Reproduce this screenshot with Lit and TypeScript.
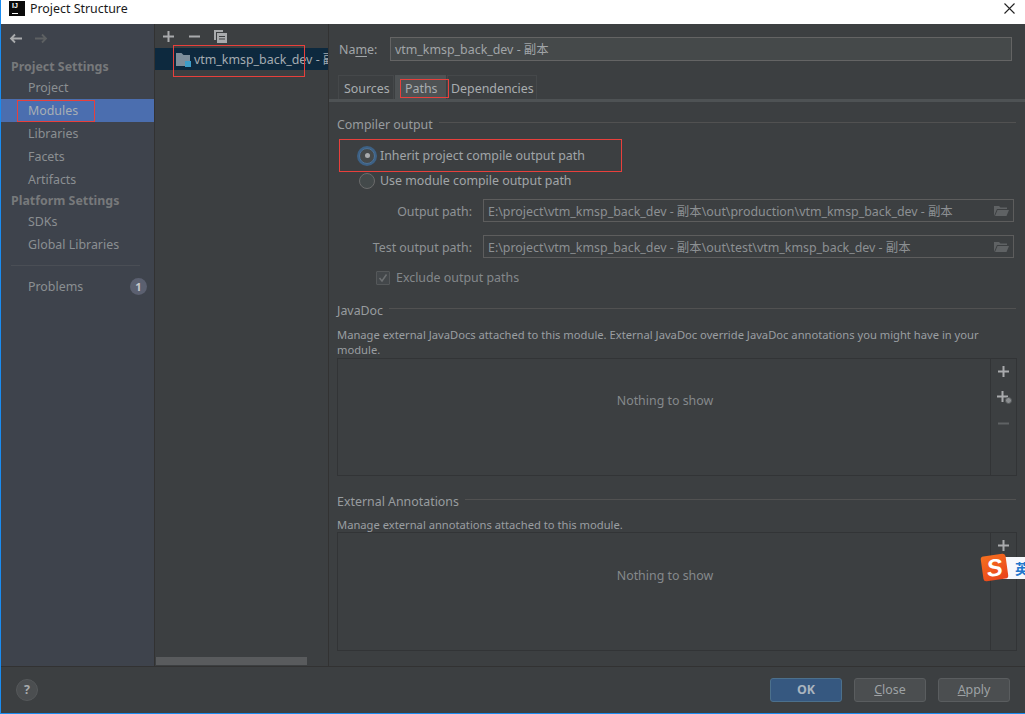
import { LitElement, html, css, svg } from "lit";
import { customElement } from "lit/decorators.js";

const folderIcon = svg`<svg width="14" height="13" viewBox="0 0 14 13"><path d="M0 0h5.500l2 2H14v11H0z" fill="#7d8e9b"/></svg>`;
const openFolder = html`<svg width="15" height="12" viewBox="0 0 15 12"><path d="M0 1h5l1.500 1.500H13V4H3L0 11z" fill="#5f6264"/><path d="M3.500 5H15l-2.500 6H1z" fill="#5f6264"/></svg>`;

@customElement("app-root")
export class AppRoot extends LitElement {
  static styles = css`
    :host {
      display: flex;
      flex-direction: column;
      position: relative;
      width: 1025px;
      height: 714px;
      box-sizing: border-box;
      border-left: 1px solid #1a8cf0;
      border-bottom: 1px solid #1a8cf0;
      background: #3c3f41;
      color: #a1a5a8;
      font: 12.4px/18px "Noto Sans", "Noto Sans CJK SC", sans-serif;
      overflow: hidden;
    }
    .title {
      height: 24px;
      flex: none;
      background: #fff;
      color: #1a1a1a;
      display: flex;
      align-items: flex-start;
      gap: 5px;
      padding: 1px 10px 0 8px;
      box-sizing: border-box;
    }
    .logo {
      width: 16px;
      height: 15px;
      background: #0b0b0b;
      color: #fff;
      font: bold 7px/8px "Liberation Sans", sans-serif;
      padding: 1px 0 0 3px;
      box-sizing: border-box;
      position: relative;
      flex: none;
    }
    .logo::after {
      content: "";
      position: absolute;
      left: 3px;
      bottom: 2px;
      width: 6px;
      height: 1px;
      background: #fff;
    }
    .title .t { flex: 1; line-height: 15px; }
    .title svg { margin-top: 2px; }
    .main { flex: 1; display: flex; min-height: 0; border-bottom: 1px solid #323232; }
    .side {
      width: 153px;
      flex: none;
      background: #3e434c;
      border-right: 1px solid #323232;
      color: #8b8f92;
    }
    .nav { height: 30px; display: flex; align-items: center; gap: 11px; padding: 0 0 2px 8px; box-sizing: border-box; }
    .hd { height: 19px; line-height: 20px; padding-left: 10px; font-weight: 700; color: #77797b; margin-top: 3px; }
    .hd.p2 { height: 19px; line-height: 19px; margin-top: 0; }
    .item { height: 23px; line-height: 23px; padding-left: 27px; display: flex; justify-content: space-between; align-items: center; padding-right: 7px; }
    .item.sel { background: #4b6eaf; color: #a8aeb4; }
    .sep { height: 1px; background: #4a4e55; margin: 9px 14px 9px 10px; }
    .badge { width: 17px; height: 17px; border-radius: 50%; background: #5b6070; color: #c6c8ca; font-size: 11px; font-weight: 700; line-height: 17px; text-align: center; }
    .mid {
      width: 173px;
      flex: none;
      display: flex;
      flex-direction: column;
      border-right: 1px solid #323232;
      min-width: 0;
    }
    .tools { height: 24px; flex: none; display: flex; align-items: center; gap: 15px; padding: 0 0 0 8px; }
    .tools svg:last-child { margin-left: -1px; margin-top: 1px; }
    .row {
      height: 22px;
      flex: none;
      background: #0d293e;
      color: #a5acb2;
      display: flex;
      align-items: center;
      gap: 4px;
      padding-left: 21px;
      white-space: nowrap;
      overflow: hidden;
    }
    .row .label { padding-top: 2px; }
    .fi { position: relative; display: flex; flex: none; }
    .fi i { position: absolute; right: -1px; bottom: -1px; width: 6px; height: 6px; background: #3d9ec9; }
    .mgap { flex: 1; }
    .hbar { height: 8px; width: 151px; background: #595b5d; margin: 0 0 1px 1px; flex: none; }
    .right { flex: 1; min-width: 0; display: flex; flex-direction: column; }
    .name { display: flex; align-items: center; gap: 12px; padding: 13px 13px 0 10px; height: 24px; flex: none; }
    .name > span { width: 39px; flex: none; padding-top: 2px; }
    .name u { text-underline-offset: 2px; }
    .input {
      flex: 1;
      height: 24px;
      box-sizing: border-box;
      border: 1px solid #646464;
      background: #45494a;
      line-height: 23px;
      padding-left: 4px;
      color: #a1a5a8;
    }
    .tabs { display: flex; margin: 14px 0 0 9px; height: 24px; flex: none; gap: 1px; }
    .tab { border: 1px solid #45484a; border-bottom: none; box-sizing: border-box; line-height: 25px; color: #a9adb0; }
    .tab.src { width: 56px; padding-left: 5px; }
    .tab.on { background: #4e5254; border-color: #4e5254; width: 51px; padding-left: 9px; }
    .tab.dep { width: 90px; padding-left: 3px; }
    .strip { height: 3px; background: #4e5254; flex: none; }
    .body { flex: 1; padding: 0 9px 0 8px; display: flex; flex-direction: column; min-height: 0; }
    .legend { display: flex; align-items: center; gap: 6px; height: 18px; color: #989c9f; }
    .legend::after { content: ""; flex: 1; height: 1px; background: #515151; margin-top: -5px; }
    .legend.l1 { margin-top: 14px; }
    .legend.l2 { margin-top: 15px; }
    .legend.l3 { margin-top: 17px; }
    .radio-row { display: flex; align-items: center; gap: 5px; padding-left: 22px; }
    .first { margin-top: 5px; height: 33px; }
    .second { height: 17px; }
    .radio { width: 14px; height: 14px; border-radius: 50%; border: 1px solid #6b6b6b; background: #43494a; flex: none; box-sizing: content-box; display: grid; place-items: center; }
    .radio.on { border: 1px solid #4c7196; box-shadow: 0 0 0 2px #3d6185; background: #45494a; }
    .radio.on::after { content: ""; width: 5px; height: 5px; border-radius: 50%; background: #a9abad; }
    .path { display: flex; align-items: center; height: 23px; margin-top: 13px; color: #8f9396; }
    .path:first-child { margin-top: 0; }
    .plabel { width: 135px; text-align: right; margin-right: 11px; flex: none; padding-top: 2px; }
    .pfield {
      flex: 1;
      height: 23px;
      box-sizing: border-box;
      border: 1px solid #5d5d5d;
      background: #3c3f41;
      color: #8c9093;
      line-height: 21px;
      padding: 0 4px;
      display: flex;
      justify-content: space-between;
      align-items: center;
      margin-right: 2px;
    }
    .pfield span { padding-top: 2px; }
    .paths { margin-top: 10px; }
    .check { display: flex; align-items: center; gap: 6px; height: 18px; margin: 11px 0 0 39px; color: #84888b; }
    .box { width: 12px; height: 12px; background: #43474a; border: 1px solid #55585a; border-radius: 1px; display: grid; place-items: center; flex: none; }
    .desc { font-size: 11.2px; line-height: 15px; color: #9a9ea1; }
    .desc.d1 { margin-top: 7px; }
    .desc.d2 { margin-top: 6px; }
    .tbl { display: flex; border: 1px solid #323436; box-sizing: border-box; margin: 1px -1px 0 0; }
    .tbl.t1 { height: 118px; }
    .tbl.t2 { height: 119px; margin-top: 0; }
    .tbl .empty { flex: 1; display: grid; place-items: center; color: #85898c; padding: 0 0 32px 2px; }
    .tbl .acts { width: 26px; border-left: 1px solid #323436; display: flex; flex-direction: column; align-items: center; padding-top: 7px; gap: 15px; box-sizing: border-box; }
    .acts .lib { margin: -2px 0 -2px 2px; }
    .foot { height: 46px; flex: none; display: flex; align-items: center; justify-content: flex-end; gap: 12px; padding: 0 15px 0 15px; }
    .help { width: 22px; height: 22px; border-radius: 50%; background: #4b4e50; border: 1px solid #55585a; box-sizing: border-box; color: #a8abad; font-weight: 700; text-align: center; line-height: 20px; margin-right: auto; }
    .btn { width: 72px; height: 24px; box-sizing: border-box; border: 1px solid #5a5d5f; border-radius: 3px; background: #4b4e50; color: #9ea2a5; text-align: center; line-height: 22px; }
    .btn.ok { background: #365880; border-color: #4c708c; color: #a9b4bf; font-weight: 700; }
    .mark { position: absolute; border: 1px solid #e8403c; box-sizing: border-box; pointer-events: none; }
    .m1 { left: 172px; top: 45px; width: 132px; height: 32px; }
    .m2 { left: 16px; top: 100px; width: 78px; height: 22px; }
    .m3 { left: 399px; top: 79px; width: 49px; height: 19px; }
    .m4 { left: 338px; top: 139px; width: 283px; height: 33px; }
    .ime { position: absolute; left: 981px; top: 555px; width: 44px; height: 26px; display: flex; align-items: center; }
    .ime .s { position: absolute; left: 0; top: 0; width: 25px; height: 25px; border-radius: 3px; background: linear-gradient(160deg, #f7701f, #e8421a); color: #fff; font: italic 900 24px/25px "Liberation Sans", sans-serif; text-align: center; transform: rotate(-8deg); z-index: 1; }
    .ime .w { margin-left: 20px; flex: 1; height: 22px; background: #f6f8fc; color: #2277cc; font: 700 14px/22px "Noto Sans CJK SC", sans-serif; padding-left: 13px; white-space: nowrap; overflow: hidden; }
  `;

  private plus(color = "#a9abad") {
    return html`<svg width="11" height="11" viewBox="0 0 11 11"><path d="M4.500 0h2v4.500H11v2H6.500V11h-2V6.500H0v-2h4.500z" fill=${color}/></svg>`;
  }

  render() {
    return html`
      <div class="title">
        <div class="logo">IJ</div>
        <span class="t">Project Structure</span>
        <svg width="11" height="11" viewBox="0 0 11 11"><path d="M.5.5l10 10M10.500.5l-10 10" stroke="#222" stroke-width="1.100" fill="none"/></svg>
      </div>
      <div class="main">
        <aside class="side">
          <div class="nav">
            <svg width="14" height="11" viewBox="0 0 14 11"><path d="M13 5.500H2M6 1.500l-4 4 4 4" stroke="#a9abad" stroke-width="1.800" fill="none"/></svg>
            <svg width="14" height="11" viewBox="0 0 14 11"><path d="M1 5.500h11M8 1.500l4 4-4 4" stroke="#5d6062" stroke-width="1.800" fill="none"/></svg>
          </div>
          <div class="hd">Project Settings</div>
          <div class="item">Project</div>
          <div class="item sel">Modules</div>
          <div class="item">Libraries</div>
          <div class="item">Facets</div>
          <div class="item">Artifacts</div>
          <div class="hd p2">Platform Settings</div>
          <div class="item">SDKs</div>
          <div class="item">Global Libraries</div>
          <div class="sep"></div>
          <div class="item">Problems <span class="badge">1</span></div>
        </aside>
        <section class="mid">
          <div class="tools">
            ${this.plus()}
            <svg width="11" height="11" viewBox="0 0 11 11"><rect y="4.500" width="11" height="2" fill="#a9abad"/></svg>
            <svg width="13" height="13" viewBox="0 0 13 13"><path d="M0 0h9v2H2v8H0z" fill="#a9abad"/><path d="M3 3h10v10H3zM5 6v1h6V6zM5 8.500v1h6v-1z" fill="#a9abad" fill-rule="evenodd"/></svg>
          </div>
          <div class="row">
            <span class="fi">${folderIcon}<i></i></span>
            <span class="label">vtm_kmsp_back_dev - 副本</span>
          </div>
          <div class="mgap"></div>
          <div class="hbar"></div>
        </section>
        <section class="right">
          <div class="name"><span>Na<u>m</u>e:</span><div class="input">vtm_kmsp_back_dev - 副本</div></div>
          <div class="tabs">
            <div class="tab src">Sources</div>
            <div class="tab on">Paths</div>
            <div class="tab dep">Dependencies</div>
          </div>
          <div class="strip"></div>
          <div class="body">
            <div class="legend l1">Compiler output</div>
            <div class="radio-row first"><span class="radio on"></span>Inherit project compile output path</div>
            <div class="radio-row second"><span class="radio"></span>Use module compile output path</div>
            <div class="paths">
              <div class="path"><span class="plabel">Output path:</span><div class="pfield"><span>E:\\project\\vtm_kmsp_back_dev - 副本\\out\\production\\vtm_kmsp_back_dev - 副本</span>${openFolder}</div></div>
              <div class="path"><span class="plabel">Test output path:</span><div class="pfield"><span>E:\\project\\vtm_kmsp_back_dev - 副本\\out\\test\\vtm_kmsp_back_dev - 副本</span>${openFolder}</div></div>
            </div>
            <div class="check">
              <span class="box"><svg width="10" height="10" viewBox="0 0 10 10"><path d="M1.500 5l2.500 3 4.500-6.500" stroke="#6d7072" stroke-width="1.500" fill="none"/></svg></span>
              Exclude output paths
            </div>
            <div class="legend l2">JavaDoc</div>
            <div class="desc d1">Manage external JavaDocs attached to this module. External JavaDoc override JavaDoc annotations you might have in your module.</div>
            <div class="tbl t1">
              <div class="empty">Nothing to show</div>
              <div class="acts">
                ${this.plus()}
                <svg class="lib" width="15" height="15" viewBox="0 0 15 15"><path d="M4.500 1h2v4.500H11v2H6.500V12h-2V7.500H0v-2h4.500z" fill="#a9abad"/><circle cx="11.500" cy="10.500" r="3" fill="#8a8d8f" stroke="#55585a"/></svg>
                <svg width="11" height="11" viewBox="0 0 11 11"><rect y="4.500" width="11" height="2" fill="#5f6264"/></svg>
              </div>
            </div>
            <div class="legend l3">External Annotations</div>
            <div class="desc d2">Manage external annotations attached to this module.</div>
            <div class="tbl t2">
              <div class="empty">Nothing to show</div>
              <div class="acts">${this.plus()}</div>
            </div>
          </div>
        </section>
      </div>
      <footer class="foot">
        <div class="help">?</div>
        <div class="btn ok">OK</div>
        <div class="btn"><u>C</u>lose</div>
        <div class="btn"><u>A</u>pply</div>
      </footer>
      <div class="mark m1"></div>
      <div class="mark m2"></div>
      <div class="mark m3"></div>
      <div class="mark m4"></div>
      <div class="ime"><div class="s">S</div><div class="w">英</div></div>
    `;
  }
}
